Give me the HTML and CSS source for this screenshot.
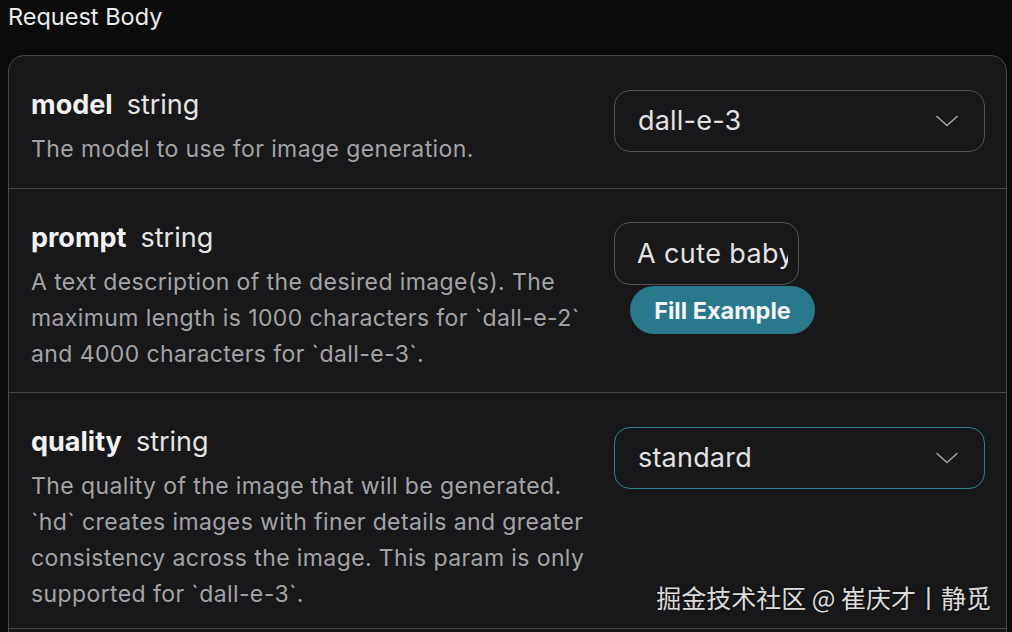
FILE: index.html
```html
<!DOCTYPE html>
<html lang="en">
<head>
<meta charset="utf-8">
<title>Request Body</title>
<link rel="stylesheet" href="styles.css">
</head>
<body>
<div class="page">
  <div class="heading">Request Body</div>
  <div class="card">
    <div class="row">
      <div class="info">
        <div class="title"><span class="name">model</span><span class="type">string</span></div>
        <div class="desc">The model to use for image generation.</div>
      </div>
      <div class="control">
        <div class="select">
          <span class="value">dall-e-3</span>
          <svg class="chev" width="22" height="12" viewBox="0 0 22 12"><path d="M1 1.5 L11 10.5 L21 1.5" fill="none" stroke="#a8a8a8" stroke-width="1.5" stroke-linecap="round" stroke-linejoin="round"/></svg>
        </div>
      </div>
    </div>
    <div class="row">
      <div class="info">
        <div class="title"><span class="name">prompt</span><span class="type">string</span></div>
        <div class="desc">A text description of the desired image(s). The maximum length is 1000 characters for `dall-e-2` and 4000 characters for `dall-e-3`.</div>
      </div>
      <div class="control">
        <div class="input"><span class="value">A cute baby sea otter</span></div>
        <button class="fill">Fill Example</button>
      </div>
    </div>
    <div class="row last">
      <div class="info">
        <div class="title"><span class="name">quality</span><span class="type">string</span></div>
        <div class="desc">The quality of the image that will be generated. `hd` creates images with finer details and greater consistency across the image. This param is only supported for `dall-e-3`.</div>
      </div>
      <div class="control">
        <div class="select focus">
          <span class="value">standard</span>
          <svg class="chev" width="22" height="12" viewBox="0 0 22 12"><path d="M1 1.5 L11 10.5 L21 1.5" fill="none" stroke="#a8a8a8" stroke-width="1.5" stroke-linecap="round" stroke-linejoin="round"/></svg>
        </div>
      </div>
    </div>
    <div class="row"></div>
  </div>
  <div class="watermark">掘金技术社区 @ 崔庆才丨静觅</div>
</div>
</body>
</html>
```
FILE: styles.css
```css
html, body {
  margin: 0;
  padding: 0;
  background: #0b0b0c;
  overflow: hidden;
  height: 632px;
}
.page {
  position: relative;
  height: 632px;
  overflow: hidden;
  padding: 0 5px 0 8px;
  font-family: Inter, "Noto Sans", "Noto Sans CJK SC", sans-serif;
  color: #e6e6e6;
}
.heading {
  font-size: 23.5px;
  line-height: 34px;
  color: #ececec;
  margin-bottom: 21px;
}
.card {
  background: #18181a;
  border: 1.5px solid #474747;
  border-radius: 16px;
}
.row {
  display: grid;
  grid-template-columns: 570px 371px;
  justify-content: space-between;
  padding: 31px 21px 20.5px 22px;
  border-bottom: 1.5px solid #474747;
}
.row.last {
  padding-bottom: 16px;
}
.title {
  display: flex;
  align-items: baseline;
  gap: 14px;
  font-size: 27px;
  line-height: 36px;
}
.name {
  font-weight: 700;
  color: #f2f2f2;
}
.type {
  font-weight: 400;
  color: #e4e4e4;
}
.desc {
  margin-top: 8px;
  font-size: 23px;
  letter-spacing: 0.4px;
  line-height: 36px;
  color: #a4a4a6;
}
.control {
  display: flex;
  flex-direction: column;
  align-items: flex-start;
  padding-top: 2.5px;
}
.select {
  box-sizing: border-box;
  width: 371px;
  height: 62px;
  border: 1.5px solid #525254;
  border-radius: 16px;
  display: flex;
  align-items: center;
  justify-content: space-between;
  padding: 0 26px 0 23px;
}
.select.focus {
  border-color: #2f7f92;
}
.value {
  font-size: 27px;
  letter-spacing: 0.2px;
  color: #e2e2e2;
  white-space: nowrap;
}
.chev {
  display: block;
}
.input {
  box-sizing: border-box;
  width: 185px;
  height: 63px;
  border: 1.5px solid #525254;
  border-radius: 16px;
  padding: 0 0 0 22px;
  display: flex;
  align-items: center;
  overflow: hidden;
}
.input .value {
  overflow: hidden;
  width: 151px;
  letter-spacing: 0.4px;
}
.fill {
  margin: 1px 0 0 16px;
  height: 48px;
  width: 185px;
  border: none;
  border-radius: 24px;
  background: #2a788b;
  color: #f4f4f4;
  font-family: Inter, "Noto Sans", sans-serif;
  font-weight: 700;
  font-size: 23.5px;
  padding: 0;
}
.watermark {
  position: absolute;
  right: 21px;
  top: 580px;
  font-size: 25px;
  line-height: 34px;
  color: #dcdcdc;
  text-shadow: 0 0 3px rgba(0,0,0,0.6);
  font-family: "Noto Sans CJK SC", sans-serif;
}
```
